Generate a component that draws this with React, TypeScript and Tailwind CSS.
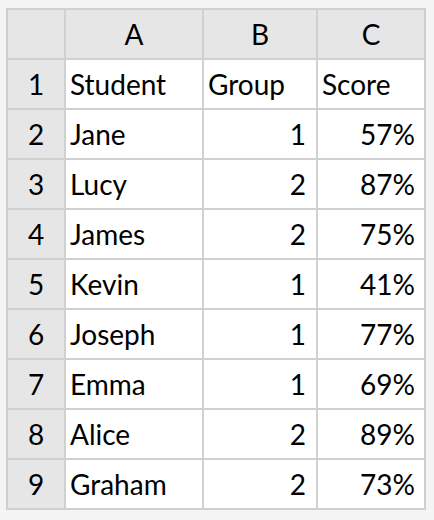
import React from "react";

const rows = [
  ["Jane", "1", "57%"],
  ["Lucy", "2", "87%"],
  ["James", "2", "75%"],
  ["Kevin", "1", "41%"],
  ["Joseph", "1", "77%"],
  ["Emma", "1", "69%"],
  ["Alice", "2", "89%"],
  ["Graham", "2", "73%"],
];

const head = "bg-[#e6e6e6] flex items-center justify-center";
const cell = "bg-white flex items-center";

export default function App() {
  return (
    <div className="w-[434px] h-[520px] bg-[#f4f4f4] pt-[8px] pl-[6px] font-['Lato',sans-serif] text-[28px] leading-none text-black">
      <div className="inline-grid grid-cols-[56px_136px_112px_106px] auto-rows-[48px] gap-[2px] p-[2px] bg-[#d0d0d0]">
        <div className={head}></div>
        <div className={head}>A</div>
        <div className={head}>B</div>
        <div className={head}>C</div>

        <div className={head}>1</div>
        <div className={`${cell} pl-[4px]`}>Student</div>
        <div className={`${cell} pl-[4px]`}>Group</div>
        <div className={`${cell} pl-[4px]`}>Score</div>

        {rows.map((r, i) => (
          <React.Fragment key={i}>
            <div className={head}>{i + 2}</div>
            <div className={`${cell} pl-[4px]`}>{r[0]}</div>
            <div className={`${cell} justify-end pr-[10px]`}>{r[1]}</div>
            <div className={`${cell} justify-end pr-[9px]`}>{r[2]}</div>
          </React.Fragment>
        ))}
      </div>
    </div>
  );
}
